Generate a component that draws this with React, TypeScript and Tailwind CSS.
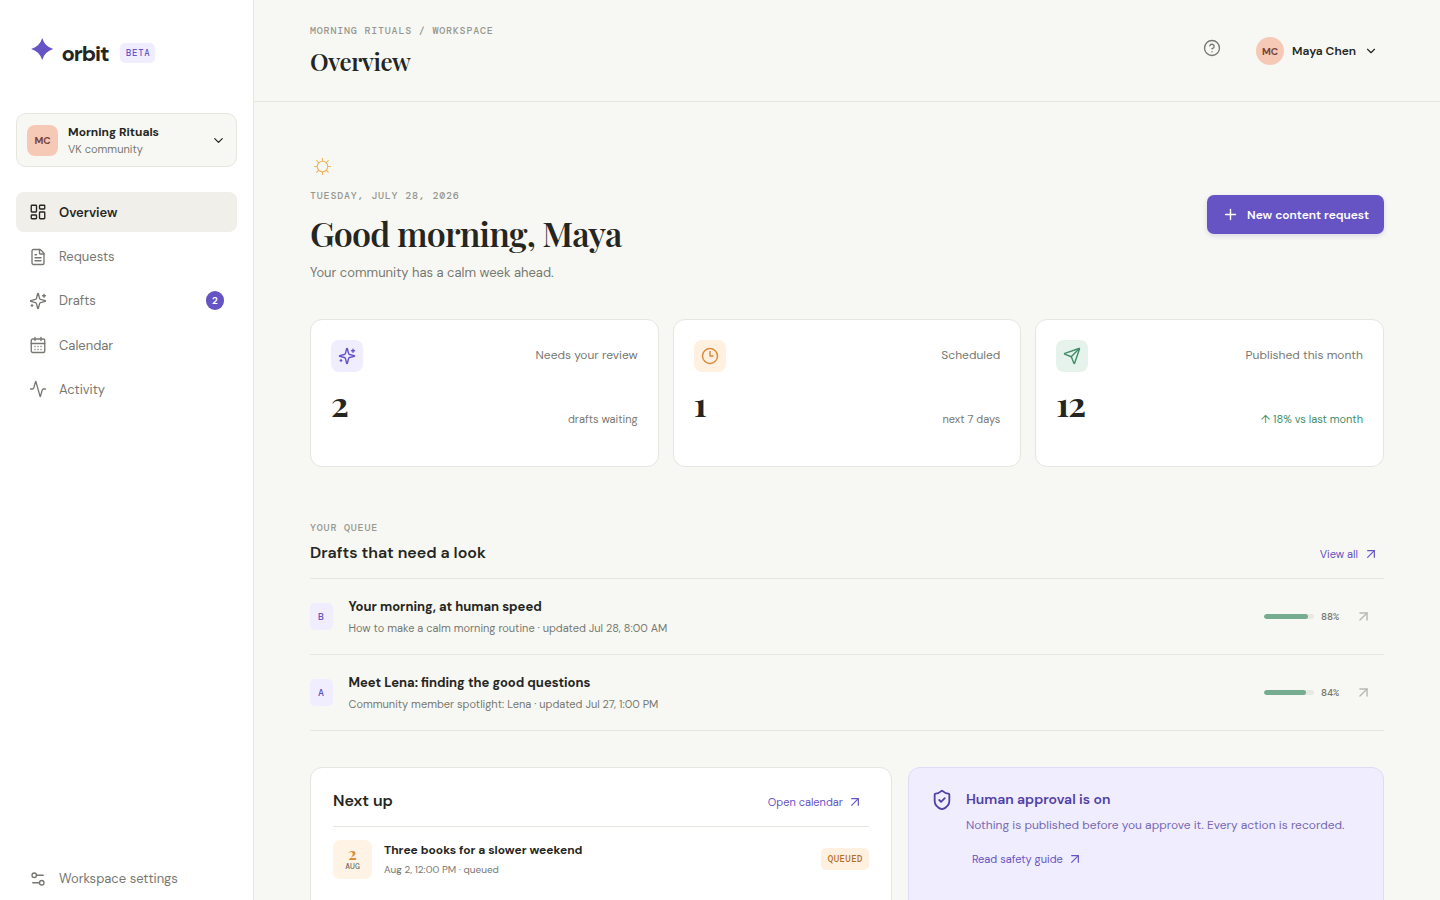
import type { ReactNode } from "react";
import {
  Activity,
  ArrowUpRight,
  CalendarDays,
  ChevronDown,
  CircleHelp,
  Clock3,
  FileText,
  LayoutDashboard,
  Plus,
  Send,
  Settings2,
  ShieldCheck,
} from "lucide-react";

function OrbitMark() {
  return (
    <svg width="24" height="24" viewBox="-1.2 -1 24 24" fill="#6754c4">
      <path d="M11 0Q13.5 8.5 22 11Q13.5 13.5 11 22Q8.5 13.5 0 11Q8.5 8.5 11 0Z" />
    </svg>
  );
}

function Sun() {
  return (
    <svg width="19" height="19" viewBox="-9 -9 18 18" fill="none" stroke="#efb55f" strokeWidth="1.1">
      <circle r="5" />
      <path d="M0-5v-3M0 5v3M-5 0h-3M5 0h3M-3.5-3.5l-2.3-2.3M3.5-3.5l2.3-2.3M-3.5 3.5l-2.3 2.3M3.5 3.5l2.3 2.3" />
    </svg>
  );
}

function Sparkles({ size = 18, strokeWidth = 2 }: { size?: number; strokeWidth?: number }) {
  return (
    <svg
      width={size}
      height={size}
      viewBox="0 0 24 24"
      fill="none"
      stroke="currentColor"
      strokeWidth={strokeWidth}
      strokeLinecap="round"
      strokeLinejoin="round"
    >
      <path d="M9.937 15.5A2 2 0 0 0 8.5 14.063l-6.135-1.582a.5.5 0 0 1 0-.962L8.5 9.936A2 2 0 0 0 9.937 8.5l1.582-6.135a.5.5 0 0 1 .963 0L14.063 8.5A2 2 0 0 0 15.5 9.937l6.135 1.581a.5.5 0 0 1 0 .964L15.5 14.063a2 2 0 0 0-1.437 1.437l-1.582 6.135a.5.5 0 0 1-.963 0z" />
      <path d="M20 3v4M22 5h-4M4 17v2M5 18H3" />
    </svg>
  );
}

const NAV = [
  { label: "Overview", icon: LayoutDashboard, active: true },
  { label: "Requests", icon: FileText },
  { label: "Drafts", icon: Sparkles, count: 2 },
  { label: "Calendar", icon: CalendarDays },
  { label: "Activity", icon: Activity },
];

const STATS = [
  {
    label: "Needs your review",
    value: "2",
    note: "drafts waiting",
    icon: Sparkles,
    tone: "bg-[#f0edff] text-[#6754c4]",
    noteTone: "text-[#777872]",
  },
  {
    label: "Scheduled",
    value: "1",
    note: "next 7 days",
    icon: Clock3,
    tone: "bg-[#fff0df] text-[#d98b3d]",
    noteTone: "text-[#777872]",
  },
  {
    label: "Published this month",
    value: "12",
    note: "↑ 18% vs last month",
    icon: Send,
    tone: "bg-[#e6f3ec] text-[#3f8f68]",
    noteTone: "text-[#3f8f68]",
  },
];

const DRAFTS = [
  {
    variant: "B",
    title: "Your morning, at human speed",
    meta: "How to make a calm morning routine · updated Jul 28, 8:00 AM",
    score: 88,
  },
  {
    variant: "A",
    title: "Meet Lena: finding the good questions",
    meta: "Community member spotlight: Lena · updated Jul 27, 1:00 PM",
    score: 84,
  },
];

function Eyebrow({ children }: { children: ReactNode }) {
  return (
    <p className="font-['DM_Mono','Liberation_Mono',monospace] text-[10px] leading-[15px] font-medium tracking-[0.08em] text-[#969790] uppercase">
      {children}
    </p>
  );
}

function TextLink({ children }: { children: ReactNode }) {
  return (
    <button className="flex items-center gap-[4.5px] pr-[5.5px] pl-1.5 text-[11px] leading-4 text-[#6754c4]">
      {children}
      <ArrowUpRight size={16} strokeWidth={1.8} />
    </button>
  );
}

function Sidebar() {
  return (
    <aside className="flex w-[254px] shrink-0 flex-col border-r border-[#e5e6e0] bg-white px-4">
      <div className="flex h-[113px] items-start pt-[35px] pl-[14px]">
        <span className="mt-[2px] w-[31.5px]">
          <OrbitMark />
        </span>
        <span className="text-[22px] leading-[38px] font-bold tracking-[-0.05em]">orbit</span>
        <span className="mt-2 ml-[11.5px] flex h-5 items-center rounded-[5px] bg-[#f0edff] pt-px pr-[5px] pl-1.5 font-['DM_Mono','Liberation_Mono',monospace] text-[9px] font-medium tracking-[0.08em] text-[#6754c4]">
          BETA
        </span>
      </div>

      <button className="flex h-[54px] items-center gap-2.5 rounded-[10px] border border-[#e5e6e0] bg-[#f7f8f3] px-2.5 text-left">
        <span className="flex size-[31px] items-center justify-center rounded-lg bg-[#f6c9b7] text-[10px] font-bold text-[#77433a]">
          MC
        </span>
        <span className="flex-1">
          <span className="block text-[12px] leading-[18px] font-bold">Morning Rituals</span>
          <span className="block text-[11px] leading-4 text-[#777872]">VK community</span>
        </span>
        <ChevronDown size={15} />
      </button>

      <nav className="mt-[25.4px] flex flex-col gap-[4.25px]">
        {NAV.map(({ label, icon: Icon, active, count }) => (
          <a
            key={label}
            className={`flex h-10 items-center gap-3 rounded-lg px-[13px] text-[13px] ${
              active ? "bg-[#f0efea] font-semibold" : "text-[#777872]"
            }`}
          >
            <Icon size={18} strokeWidth={1.8} />
            <span className="flex-1 pt-[0.4px]">{label}</span>
            {count && (
              <span className="flex h-[19px] w-[18px] items-center justify-center rounded-full bg-[#6754c4] text-[10px] font-semibold text-white">
                {count}
              </span>
            )}
          </a>
        ))}
      </nav>

      <a className="mt-auto mb-[1px] flex h-[41px] items-center gap-3 px-[13px] text-[13px] text-[#777872]">
        <Settings2 size={18} strokeWidth={1.8} />
        Workspace settings
      </a>
    </aside>
  );
}

function Header() {
  return (
    <header className="flex h-[102px] shrink-0 items-start justify-between border-b border-[#e5e6e0] px-14 pt-[23px]">
      <div>
        <Eyebrow>Morning Rituals / Workspace</Eyebrow>
        <h1 className="mt-[7px] font-['Playfair_Display',serif] text-[24px] leading-[33px] font-semibold tracking-[-0.36px]">
          Overview
        </h1>
      </div>
      <div className="flex items-start pr-1.5">
        <CircleHelp size={18} strokeWidth={1.8} className="mt-4 text-[#777872]" />
        <button className="mt-3.5 ml-[35px] flex h-7 items-center gap-2 text-[12px] font-semibold">
          <span className="flex size-7 items-center justify-center rounded-full bg-[#f6c9b7] text-[10px] font-bold text-[#77433a]">
            MC
          </span>
          Maya Chen
          <ChevronDown size={14} />
        </button>
      </div>
    </header>
  );
}

function Hero() {
  return (
    <section className="flex items-center justify-between">
      <div>
        <div className="h-[34px] pt-[6px] pl-[3px]">
          <Sun />
        </div>
        <div className="mt-[3px]">
          <Eyebrow>Tuesday, July 28, 2026</Eyebrow>
        </div>
        <h2 className="mt-[10px] font-['Playfair_Display',serif] text-[34px] leading-[40px] font-semibold tracking-[-0.79px]">
          Good morning, Maya
        </h2>
        <p className="mt-[10px] text-[13px] leading-5 text-[#777872]">
          Your community has a calm week ahead.
        </p>
      </div>
      <button className="mb-[6px] flex h-[39px] items-center gap-2 rounded-[7px] bg-[#6754c4] px-[15px] pt-px text-[12px] font-semibold text-white shadow-[0_2px_5px_rgba(103,84,196,0.2)]">
        <Plus size={17} className="mb-px" />
        New content request
      </button>
    </section>
  );
}

function Stats() {
  return (
    <section className="mt-[36px] grid grid-cols-3 gap-3.5">
      {STATS.map(({ label, value, note, icon: Icon, tone, noteTone }) => (
        <article key={label} className="h-[148px] rounded-xl border border-[#e5e6e0] bg-white p-5">
          <div className="flex items-start justify-between">
            <span className={`flex size-8 items-center justify-center rounded-lg ${tone}`}>
              <Icon size={18} strokeWidth={1.9} />
            </span>
            <span className="mt-1.5 text-[12px] leading-[18px] text-[#777872]">{label}</span>
          </div>
          <div className="mt-2 flex items-start justify-between">
            <strong className="mt-px font-['Playfair_Display',serif] text-[34px] leading-[45px] font-bold tracking-[-0.03em]">
              {value}
            </strong>
            <span className={`mt-[31px] text-[11px] leading-4 ${noteTone}`}>{note}</span>
          </div>
        </article>
      ))}
    </section>
  );
}

function Queue() {
  return (
    <section className="mt-[53px]">
      <div className="flex items-end justify-between pb-[13px]">
        <div>
          <Eyebrow>Your queue</Eyebrow>
          <h3 className="mt-[6px] text-[16px] leading-6 font-semibold">Drafts that need a look</h3>
        </div>
        <div className="mb-[3px]">
          <TextLink>View all</TextLink>
        </div>
      </div>
      <div className="border-t border-[#e5e6e0]">
        {DRAFTS.map((draft) => (
          <div key={draft.variant} className="flex h-[76px] items-center border-b border-[#e5e6e0]">
            <span className="flex h-[27px] w-[23px] items-center justify-center rounded-[5px] bg-[#f0edff] pr-px font-['DM_Mono','Liberation_Mono',monospace] text-[10px] font-medium text-[#6754c4]">
              {draft.variant}
            </span>
            <div className="ml-[15.5px] flex-1 pb-px">
              <p className="text-[13px] leading-5 font-bold">{draft.title}</p>
              <p className="mt-[3px] text-[11px] leading-4 text-[#777872]">{draft.meta}</p>
            </div>
            <div className="h-[5px] w-[50px] overflow-hidden rounded-full bg-[#e9e9e3]">
              <div className="h-full rounded-full bg-[#76ad91]" style={{ width: `${draft.score}%` }} />
            </div>
            <span className="ml-[7px] w-[34px] font-['DM_Mono','Liberation_Mono',monospace] text-[10px] font-medium text-[#777872]">
              {draft.score}%
            </span>
            <ArrowUpRight size={17} className="mr-3 text-[#b8b9b3]" />
          </div>
        ))}
      </div>
    </section>
  );
}

function BottomCards() {
  return (
    <section className="mt-9 grid grid-cols-[1.1fr_0.9fr] gap-4">
      <article className="h-[180px] rounded-xl border border-[#e5e6e0] bg-white px-[22px] pt-5">
        <div className="flex h-[39px] items-start justify-between border-b border-[#e5e6e0]">
          <h3 className="mt-px text-[16px] leading-6 font-semibold">Next up</h3>
          <div className="mt-1.5">
            <TextLink>Open calendar</TextLink>
          </div>
        </div>
        <div className="mt-[13px] flex items-center">
          <div className="flex size-[39px] flex-col items-center justify-center rounded-[7px] bg-[#fff3e5] pb-0.5">
            <strong className="font-['Playfair_Display',serif] text-[16px] leading-4 font-bold text-[#d98b3d]">2</strong>
            <span className="font-['DM_Mono','Liberation_Mono',monospace] text-[8px] leading-[9px] font-medium text-[#777872]">
              AUG
            </span>
          </div>
          <div className="ml-3 flex-1 pb-0.5">
            <p className="text-[12px] leading-[18px] font-bold">Three books for a slower weekend</p>
            <p className="mt-[3px] text-[10px] leading-[15px] text-[#777872]">Aug 2, 12:00 PM · queued</p>
          </div>
          <span className="mb-px flex h-[22px] items-center rounded-[5px] bg-[#fff0df] pt-px pr-1.5 pl-[7px] font-['DM_Mono','Liberation_Mono',monospace] text-[9px] font-medium tracking-[0.05em] text-[#b66c23]">
            QUEUED
          </span>
        </div>
      </article>
      <article className="flex h-[180px] gap-[13px] rounded-xl border border-[#dfdaf8] bg-[#f0edff] pt-[21px] pr-5 pl-[22px] text-[#5141a5]">
        <ShieldCheck size={22} className="shrink-0" />
        <div>
          <h3 className="text-[14px] leading-5 font-semibold">Human approval is on</h3>
          <p className="mt-[7px] text-[12px] leading-[18px] text-[#7669b5]">
            Nothing is published before you approve it. Every action is recorded.
          </p>
          <div className="mt-[17px]">
            <TextLink>Read safety guide</TextLink>
          </div>
        </div>
      </article>
    </section>
  );
}

export default function App() {
  return (
    <div className="flex h-[900px] overflow-hidden bg-[#f7f8f3] font-['DM_Sans','Inter',sans-serif] text-[#252622]">
      <Sidebar />
      <main className="flex min-w-0 flex-1 flex-col">
        <Header />
        <div className="px-14 pt-[49px]">
          <Hero />
          <Stats />
          <Queue />
          <BottomCards />
        </div>
      </main>
    </div>
  );
}
